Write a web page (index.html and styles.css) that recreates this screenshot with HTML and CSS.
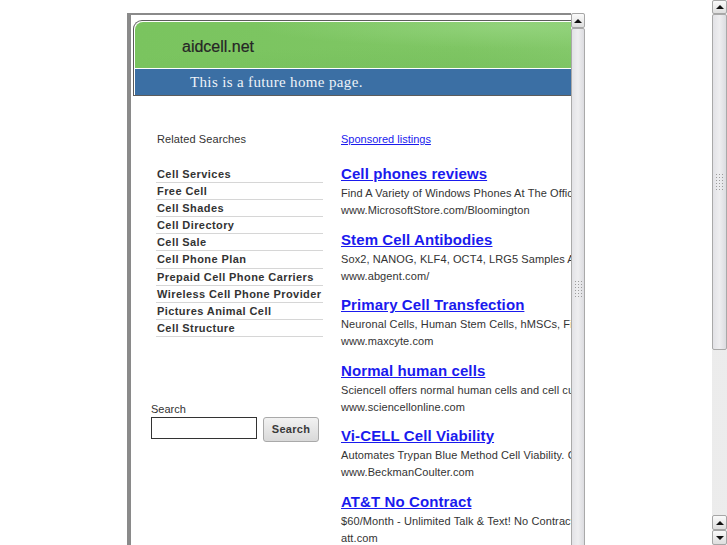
FILE: index.html
```html
<!DOCTYPE html>
<html>
<head>
<meta charset="utf-8">
<title>aidcell.net</title>
<link rel="stylesheet" href="styles.css">
</head>
<body>
<div class="screen">
  <div class="main">
    <div class="frame">
      <div class="viewport">
        <div class="site">
          <div class="header">
            <div class="banner"><span class="domain">aidcell.net</span></div>
            <div class="tagline">This is a future home page.</div>
          </div>
          <div class="content">
            <div class="left">
              <div class="related-title">Related Searches</div>
              <ul class="related">
                <li>Cell Services</li>
                <li>Free Cell</li>
                <li>Cell Shades</li>
                <li>Cell Directory</li>
                <li>Cell Sale</li>
                <li>Cell Phone Plan</li>
                <li>Prepaid Cell Phone Carriers</li>
                <li>Wireless Cell Phone Provider</li>
                <li>Pictures Animal Cell</li>
                <li>Cell Structure</li>
              </ul>
              <form class="search">
                <label class="search-label" for="q">Search</label>
                <div class="search-row">
                  <input id="q" class="search-input" type="text">
                  <button class="search-btn" type="button">Search</button>
                </div>
              </form>
            </div>
            <div class="right">
              <a class="sponsored" href="#">Sponsored listings</a>
              <div class="ads">
                <div class="ad">
                  <a class="ad-title" href="#">Cell phones reviews</a>
                  <div class="ad-desc">Find A Variety of Windows Phones At The Official Microsoft Store Today.</div>
                  <div class="ad-url">www.MicrosoftStore.com/Bloomington</div>
                </div>
                <div class="ad">
                  <a class="ad-title" href="#">Stem Cell Antibodies</a>
                  <div class="ad-desc">Sox2, NANOG, KLF4, OCT4, LRG5 Samples Available. Order Today!</div>
                  <div class="ad-url">www.abgent.com/</div>
                </div>
                <div class="ad">
                  <a class="ad-title" href="#">Primary Cell Transfection</a>
                  <div class="ad-desc">Neuronal Cells, Human Stem Cells, hMSCs, Fibroblasts &amp; More</div>
                  <div class="ad-url">www.maxcyte.com</div>
                </div>
                <div class="ad">
                  <a class="ad-title" href="#">Normal human cells</a>
                  <div class="ad-desc">Sciencell offers normal human cells and cell culture media</div>
                  <div class="ad-url">www.sciencellonline.com</div>
                </div>
                <div class="ad">
                  <a class="ad-title" href="#">Vi-CELL Cell Viability</a>
                  <div class="ad-desc">Automates Trypan Blue Method Cell Viability. Call Today!</div>
                  <div class="ad-url">www.BeckmanCoulter.com</div>
                </div>
                <div class="ad">
                  <a class="ad-title" href="#">AT&amp;T No Contract</a>
                  <div class="ad-desc">$60/Month - Unlimited Talk &amp; Text! No Contract Required.</div>
                  <div class="ad-url">att.com</div>
                </div>
              </div>
            </div>
          </div>
        </div>
      </div>
      <div class="scrollbar inner">
        <div class="sb-btn"><span class="arrow-up"></span></div>
        <div class="sb-thumb inner-thumb"><span class="grip"></span></div>
      </div>
    </div>
  </div>
  <div class="scrollbar outer">
    <div class="sb-btn"><span class="arrow-up"></span></div>
    <div class="sb-thumb outer-thumb"><span class="grip"></span></div>
    <div class="sb-track"></div>
    <div class="sb-btn"><span class="arrow-up"></span></div>
    <div class="sb-btn"><span class="arrow-down"></span></div>
  </div>
</div>
</body>
</html>
```

FILE: styles.css
```css
html, body {
  margin: 0;
  padding: 0;
  background: #ffffff;
}

body {
  font-family: "Liberation Sans", Arial, sans-serif;
  font-size: 11px;
  color: #333333;
}

.screen {
  display: flex;
  width: 727px;
  height: 545px;
  overflow: hidden;
}

.main {
  flex: 1;
  padding: 13px 0 0 127px;
  overflow: hidden;
}

.frame {
  display: flex;
  width: 458px;
  height: 532px;
  overflow: hidden;
}

.viewport {
  flex: 1;
  overflow: hidden;
}

.site {
  width: 660px;
  height: 600px;
  border-left: 4px solid #8a8a8a;
  border-top: 2px solid #8a8a8a;
  background: #ffffff;
}

/* Header */
.header {
  margin: 5px 0 0 2px;
  border: 1px solid #5c5c5c;
  border-right: none;
  border-radius: 9px 0 0 0;
  background: #ffffff;
  padding: 1px 0 0 1px;
}

.banner {
  height: 46px;
  border-radius: 8px 0 0 0;
  background:
    radial-gradient(ellipse 260px 22px at 380px 4px, rgba(160, 220, 140, 0.55), rgba(160, 220, 140, 0) 100%),
    radial-gradient(ellipse 420px 30px at 330px 54px, rgba(110, 185, 85, 0.45), rgba(110, 185, 85, 0) 100%),
    linear-gradient(90deg, #7ac45f 0%, #7fc664 50%, #8fcf79 100%);
  padding: 16px 0 0 47px;
  box-sizing: border-box;
}

.domain {
  display: block;
  font-size: 16px;
  line-height: 18px;
  color: #262626;
  -webkit-text-stroke: 0.2px #262626;
}

.tagline {
  margin-top: 1px;
  height: 26px;
  line-height: 26px;
  background: #3b6fa4;
  padding-left: 55px;
  font-family: "Liberation Serif", "DejaVu Serif", serif;
  font-size: 15px;
  letter-spacing: 0.35px;
  color: #eef3f8;
}

/* Content */
.content {
  display: flex;
  padding: 36px 0 0 20px;
}

.left {
  width: 180px;
  flex: none;
}

.related-title {
  padding-left: 6px;
  line-height: 14px;
  letter-spacing: 0.1px;
}

.related {
  list-style: none;
  margin: 20px 0 65px 5px;
  padding: 0;
  width: 167px;
}

.related li {
  font-weight: bold;
  line-height: 16.1px;
  border-bottom: 1px solid #d6d6d6;
  padding-left: 1px;
  letter-spacing: 0.42px;
  color: #333333;
}

.search {
  margin: 0;
}

.search-label {
  display: block;
  line-height: 14px;
}

.search-row {
  display: flex;
  align-items: flex-start;
  gap: 6px;
  margin-top: 1px;
}

.search-input {
  width: 106px;
  height: 22px;
  box-sizing: border-box;
  border: 1px solid #333333;
  margin: 0;
  padding: 0;
  background: #ffffff;
}

.search-btn {
  width: 56px;
  height: 25px;
  box-sizing: border-box;
  margin: 0;
  padding: 0;
  border: 1px solid #a9a9a9;
  border-radius: 3px;
  background: linear-gradient(#f2f2f2, #d9d9d9);
  font-family: "Liberation Sans", Arial, sans-serif;
  font-size: 11px;
  font-weight: bold;
  letter-spacing: 0.3px;
  color: #3a3a3a;
}

.right {
  margin-left: 10px;
  flex: 1;
  white-space: nowrap;
}

.sponsored {
  display: block;
  line-height: 14px;
  color: #1a1aee;
  text-decoration: underline;
}

.ads {
  margin-top: 18px;
}

.ad {
  margin-bottom: 10.5px;
}

.ad-title {
  display: block;
  font-size: 15px;
  font-weight: bold;
  line-height: 20px;
  margin-bottom: 1px;
  letter-spacing: 0.1px;
  color: #1a1aee;
  text-decoration: underline;
}

.ad-desc,
.ad-url {
  line-height: 17px;
  letter-spacing: 0.1px;
  color: #333333;
}

/* Scrollbars */
.scrollbar {
  width: 15px;
  flex: none;
  display: flex;
  flex-direction: column;
  background: #f3f3f3;
}

.scrollbar.inner {
  width: 14px;
}

.sb-btn {
  height: 14px;
  flex: none;
  box-sizing: border-box;
  border: 1px solid #a6a6a6;
  border-radius: 2px;
  background: linear-gradient(#fafafa, #dedede);
  display: flex;
  align-items: center;
  justify-content: center;
}

.outer .sb-btn:nth-last-child(-n+2) {
  height: 15px;
}

.inner .sb-btn {
  height: 15px;
}

.arrow-up {
  width: 0;
  height: 0;
  border-left: 4px solid transparent;
  border-right: 4px solid transparent;
  border-bottom: 4px solid #111111;
}

.arrow-down {
  width: 0;
  height: 0;
  border-left: 4px solid transparent;
  border-right: 4px solid transparent;
  border-top: 4px solid #111111;
}

.sb-thumb {
  flex: none;
  box-sizing: border-box;
  border: 1px solid #a9a9a9;
  border-radius: 2px;
  background: linear-gradient(90deg, #e2e2e6, #eeeef0 50%, #dcdce0);
  display: flex;
  align-items: center;
  justify-content: center;
}

.outer-thumb {
  height: 336px;
}

.inner-thumb {
  height: 522px;
}

.grip {
  width: 9px;
  height: 18px;
  background-image: radial-gradient(circle, #9c9c9c 0.7px, rgba(0, 0, 0, 0) 1px);
  background-size: 3px 3px;
}

.sb-track {
  flex: 1;
  background-color: #f6f6f6;
  background-image: radial-gradient(circle, #e6e6e6 0.6px, rgba(0, 0, 0, 0) 0.9px);
  background-size: 2px 2px;
}
```
